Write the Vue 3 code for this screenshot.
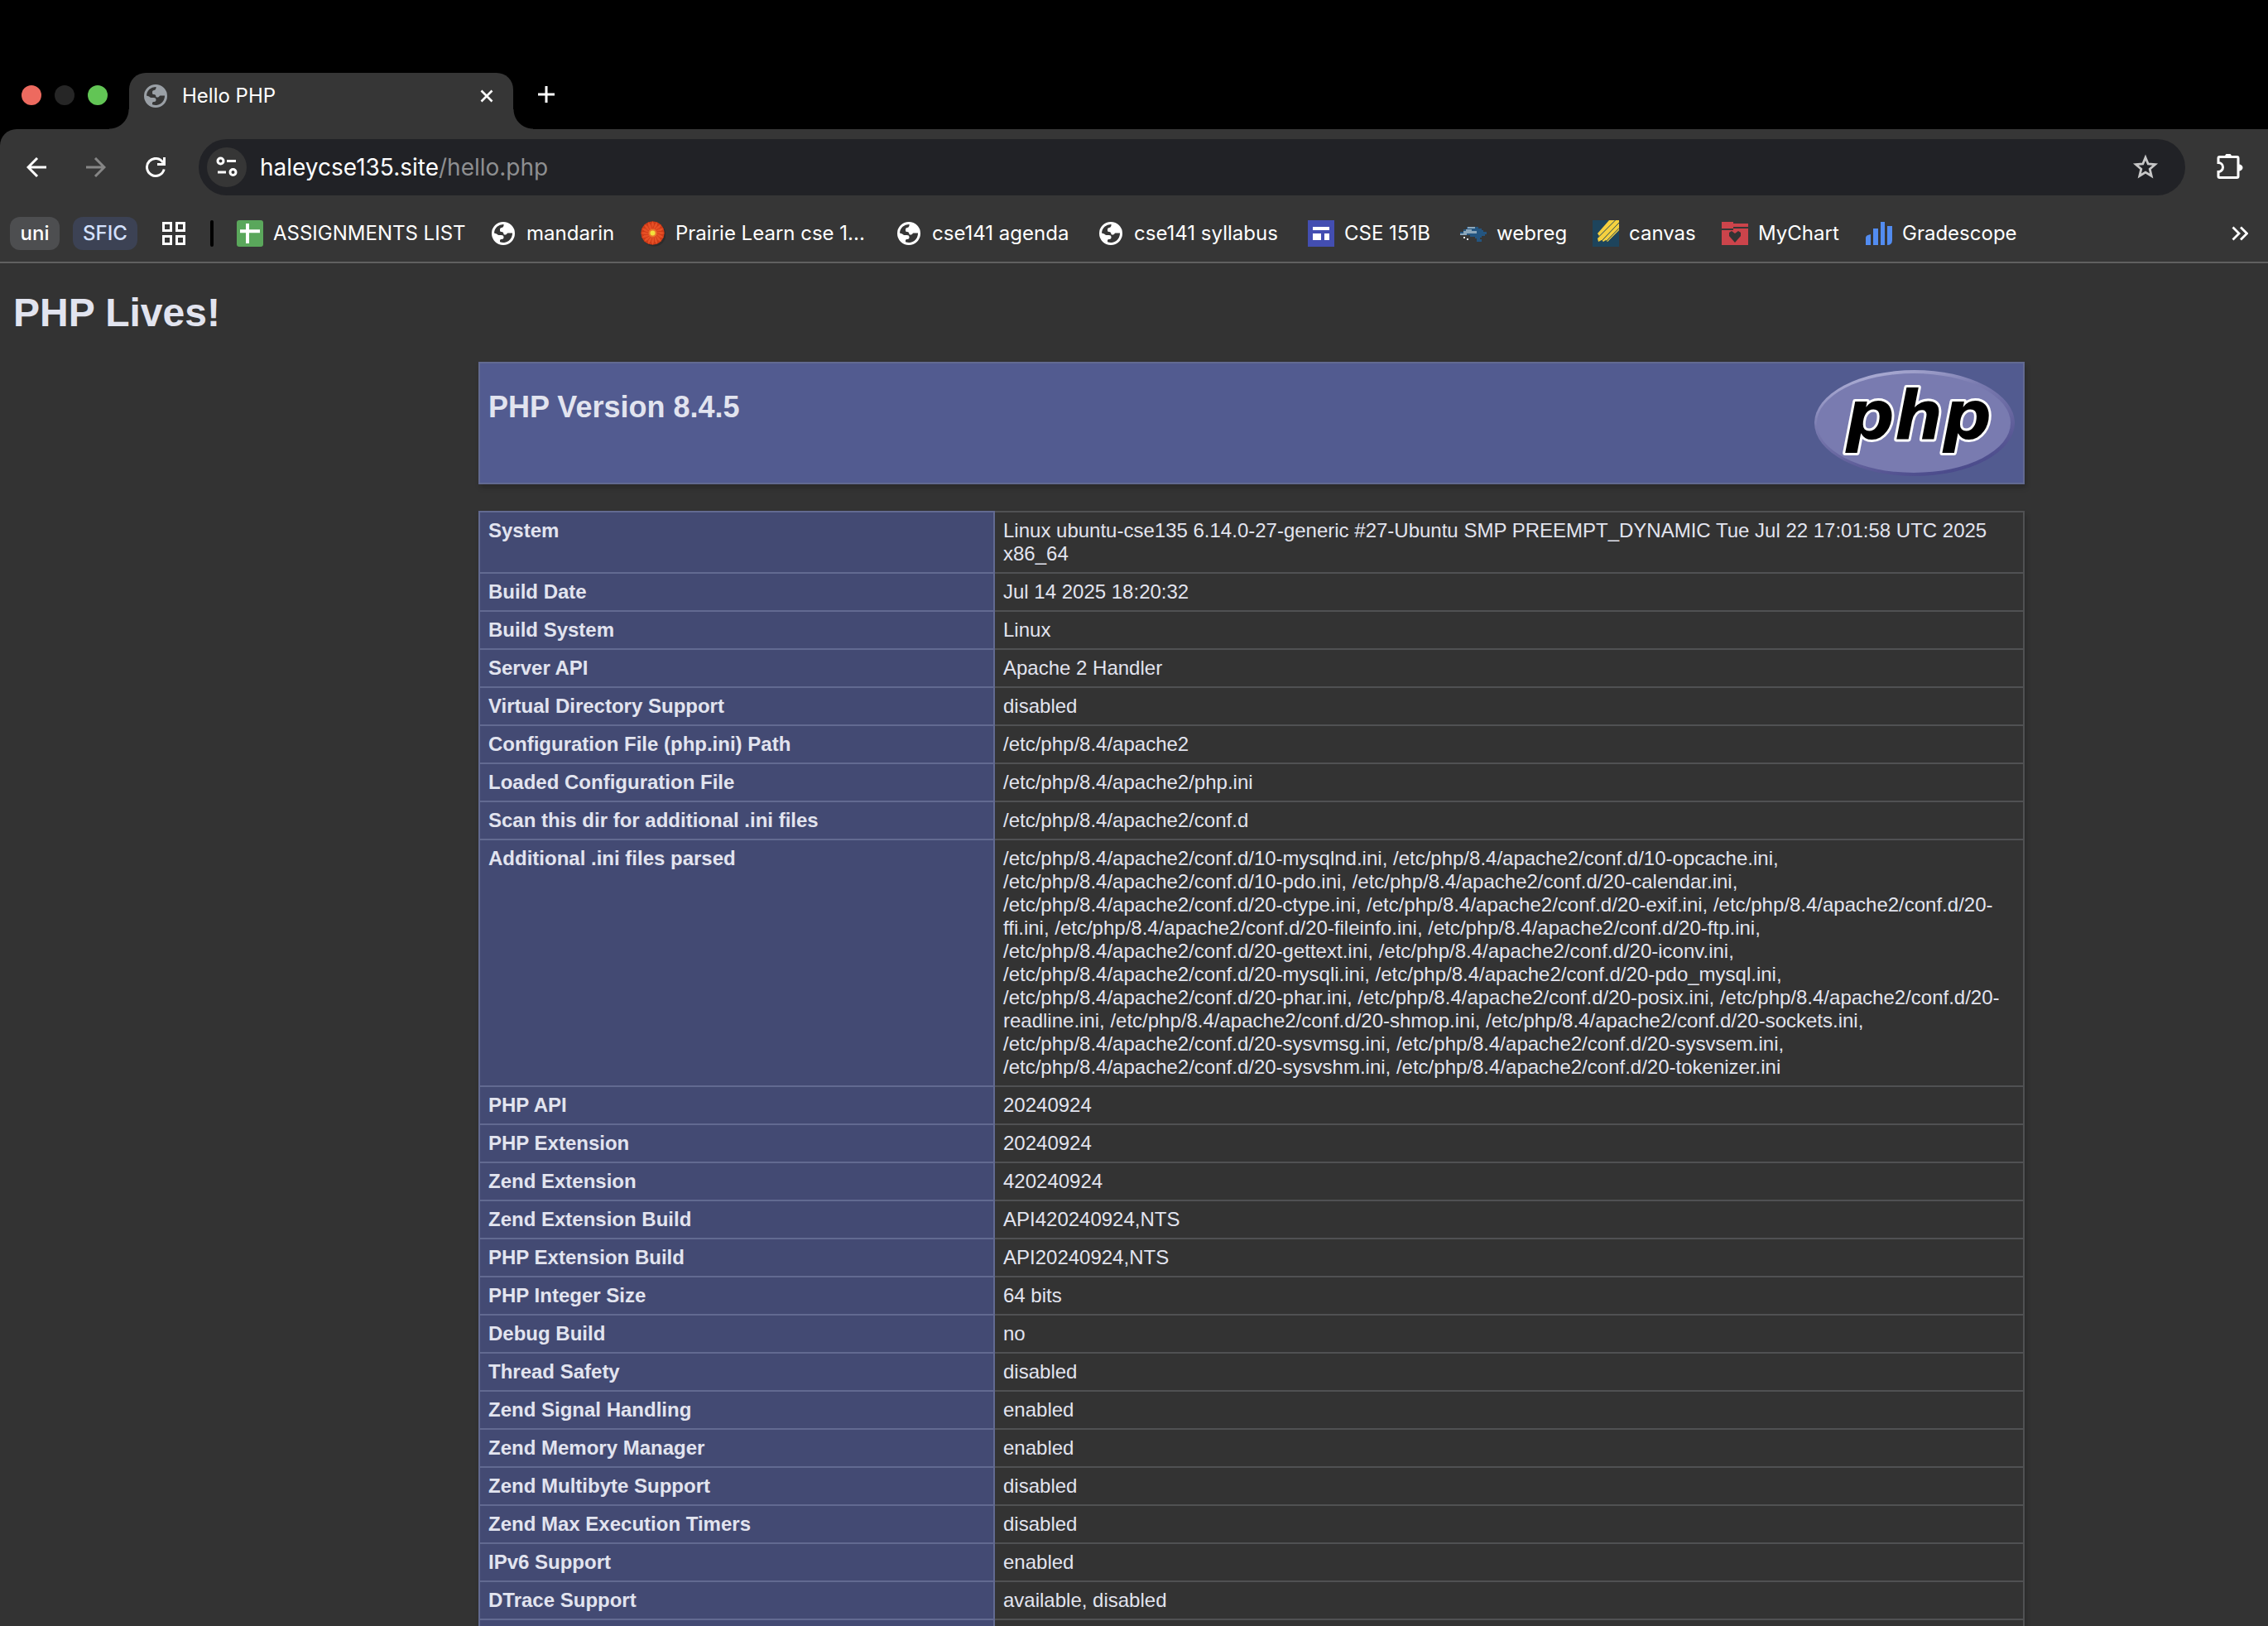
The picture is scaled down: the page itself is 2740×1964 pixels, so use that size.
<script setup>
const bookmarks = [
  { label: 'ASSIGNMENTS LIST', icon: 'sheet', width: 306 },
  { label: 'mandarin', icon: 'globe', width: 180 },
  { label: 'Prairie Learn cse 1...', icon: 'flower', width: 310 },
  { label: 'cse141 agenda', icon: 'globe', width: 244 },
  { label: 'cse141 syllabus', icon: 'globe', width: 254 },
  { label: 'CSE 151B', icon: 'sites', width: 184 },
  { label: 'webreg', icon: 'dolphin', width: 160 },
  { label: 'canvas', icon: 'canvas', width: 156 },
  { label: 'MyChart', icon: 'chart', width: 174 },
  { label: 'Gradescope', icon: 'bars', width: 184 },
]

const petals = Array.from({ length: 16 }, (_, i) => i * 22.5)

const dir = '/etc/php/8.4/apache2/conf.d/'
const iniFiles = [
  '10-mysqlnd', '10-opcache', '10-pdo', '20-calendar', '20-ctype', '20-exif', '20-ffi',
  '20-fileinfo', '20-ftp', '20-gettext', '20-iconv', '20-mysqli', '20-pdo_mysql', '20-phar',
  '20-posix', '20-readline', '20-shmop', '20-sockets', '20-sysvmsg', '20-sysvsem',
  '20-sysvshm', '20-tokenizer',
].map((name) => `${dir}${name}.ini`).join(', ')

const rows = [
  ['System', 'Linux ubuntu-cse135 6.14.0-27-generic #27-Ubuntu SMP PREEMPT_DYNAMIC Tue Jul 22 17:01:58 UTC 2025 x86_64'],
  ['Build Date', 'Jul 14 2025 18:20:32'],
  ['Build System', 'Linux'],
  ['Server API', 'Apache 2 Handler'],
  ['Virtual Directory Support', 'disabled'],
  ['Configuration File (php.ini) Path', '/etc/php/8.4/apache2'],
  ['Loaded Configuration File', '/etc/php/8.4/apache2/php.ini'],
  ['Scan this dir for additional .ini files', '/etc/php/8.4/apache2/conf.d'],
  ['Additional .ini files parsed', iniFiles],
  ['PHP API', '20240924'],
  ['PHP Extension', '20240924'],
  ['Zend Extension', '420240924'],
  ['Zend Extension Build', 'API420240924,NTS'],
  ['PHP Extension Build', 'API20240924,NTS'],
  ['PHP Integer Size', '64 bits'],
  ['Debug Build', 'no'],
  ['Thread Safety', 'disabled'],
  ['Zend Signal Handling', 'enabled'],
  ['Zend Memory Manager', 'enabled'],
  ['Zend Multibyte Support', 'disabled'],
  ['Zend Max Execution Timers', 'disabled'],
  ['IPv6 Support', 'enabled'],
  ['DTrace Support', 'available, disabled'],
  ['', ''],
]
</script>

<template>
  <div class="browser">
    <svg class="defs" aria-hidden="true">
      <symbol id="globe" viewBox="0 0 28 28">
        <path fill="currentColor" fill-rule="evenodd" d="M14 0a14 14 0 1 0 0 28a14 14 0 0 0 0-28zM14.5 3C14.8 5 13.8 6.6 12 7C10 7.3 10 8.400 10 10.500C10 11.500 11 12 12 12C13.500 12 14.300 13 14.300 14.200C14.300 15.400 15.500 15.800 17 15.500C18.300 15.200 18.500 13.500 19.500 13.500H25A11 11 0 0 1 10 24.300V22.500C10 21.500 10.800 21 12 21C14 21 14.500 19.800 14.500 18.500C14.500 16.800 13.500 16 11.500 16H8.500C7.500 16 7 15 6 14.500L3 13.500A11 11 0 0 1 14.500 3z" />
      </symbol>
    </svg>

    <header class="tabstrip">
      <div class="lights"><i class="red"></i><i class="dim"></i><i class="green"></i></div>
      <div class="tab">
        <svg class="favicon"><use href="#globe" /></svg>
        <span class="tab-title">Hello PHP</span>
        <button class="icon-btn" aria-label="Close tab">
          <svg width="16" height="16" viewBox="0 0 16 16"><path d="M1.500 1.500l13 13M14.500 1.500l-13 13" stroke="#fff" stroke-width="2.600" /></svg>
        </button>
      </div>
      <button class="icon-btn new-tab" aria-label="New tab">
        <svg width="20" height="20" viewBox="0 0 20 20"><path d="M10 0v20M0 10h20" stroke="#fff" stroke-width="3" /></svg>
      </button>
    </header>

    <nav class="toolbar">
      <button class="icon-btn" aria-label="Back">
        <svg width="24" height="24" viewBox="0 0 24 24"><path d="M24 12H2.500M13 1L2 12l11 11" fill="none" stroke="#fff" stroke-width="3" /></svg>
      </button>
      <button class="icon-btn" aria-label="Forward">
        <svg width="24" height="24" viewBox="0 0 24 24"><path d="M0 12h21.500M11 1l11 11-11 11" fill="none" stroke="#868686" stroke-width="3" /></svg>
      </button>
      <button class="icon-btn" aria-label="Reload">
        <svg width="24" height="24" viewBox="0 0 24 24"><path d="M22.200 14.500A10.500 10.500 0 1 1 21 6.500M22.500 0v8.500H14" fill="none" stroke="#fff" stroke-width="3" /></svg>
      </button>
      <div class="omnibox">
        <button class="site-info" aria-label="View site information">
          <svg width="26" height="26" viewBox="0 0 26 26" fill="none" stroke="#fff" stroke-width="3"><circle cx="5.500" cy="5.500" r="3.500" /><path d="M13 5.500h11M2 19h10" /><circle cx="20.500" cy="19" r="3.500" /></svg>
        </button>
        <span class="url">haleycse135.site<span class="path">/hello.php</span></span>
        <button class="icon-btn" aria-label="Bookmark this tab">
          <svg width="32" height="32" viewBox="0 0 32 32"><path d="M16 4.200l3.200 7.800 8.400.7-6.400 5.500 2 8.300-7.200-4.400-7.200 4.400 2-8.300-6.400-5.500 8.400-.7z" fill="none" stroke="#c7c7c7" stroke-width="2.800" /></svg>
        </button>
      </div>
      <button class="icon-btn" aria-label="Extensions">
        <svg width="32" height="32" viewBox="1 2 32 32"><path d="M4.500 5.500h21a1.500 1.500 0 0 1 1.500 1.500v22a1.500 1.500 0 0 1-1.500 1.500h-21a1.500 1.500 0 0 1-1.500-1.500v-5.500a5.500 5.500 0 0 0 0-11V7a1.500 1.500 0 0 1 1.500-1.500z" fill="none" stroke="#fff" stroke-width="3" /><path d="M11 5a4 3.500 0 0 1 8 0zM28 14.500a4.500 4 0 0 1 0 8z" fill="#fff" /></svg>
      </button>
    </nav>

    <nav class="bookmarks">
      <button class="chip uni">uni</button>
      <button class="chip sfic">SFIC</button>
      <button class="icon-btn grid-btn" aria-label="Tab groups">
        <svg width="28" height="28" viewBox="0 0 28 28" fill="none" stroke="#fff" stroke-width="3"><path d="M1.500 1.500h9v9h-9zM17.500 1.500h9v9h-9zM1.500 17.500h9v9h-9zM17.500 17.500h9v9h-9z" /></svg>
      </button>
      <i class="divider"></i>
      <a v-for="b in bookmarks" :key="b.label" href="#" class="bookmark" :style="{ width: b.width + 'px' }">
        <svg v-if="b.icon === 'globe'" class="mark" viewBox="-2 -2 32 32"><use href="#globe" width="28" height="28" /></svg>
        <svg v-else-if="b.icon === 'sheet'" class="mark" viewBox="0 0 32 32"><rect width="32" height="32" rx="3" fill="#5aa75b" /><path d="M13 4v24M4 13.200h24" stroke="#fff" stroke-width="4" /></svg>
        <svg v-else-if="b.icon === 'flower'" class="mark" viewBox="-1 0 32 32">
          <circle cx="17.500" cy="17.500" r="14" fill="#222" opacity=".5" />
          <circle cx="15.500" cy="15.500" r="14" fill="#cf3d1a" />
          <ellipse v-for="a in petals" :key="a" cx="15.500" cy="7" rx="2" ry="5.500" fill="#e65026" stroke="#c63413" stroke-width=".6" :transform="`rotate(${a} 15.5 15.500)`" />
          <circle cx="15.500" cy="15.500" r="5" fill="#e9782c" /><circle cx="15.500" cy="15.500" r="3" fill="#f3e13c" />
        </svg>
        <svg v-else-if="b.icon === 'sites'" class="mark" viewBox="0 0 32 32"><path fill="#434eb1" d="M0 0h32v32H0z" /><path fill="#fff" d="M6 8h20v4H6zM6 16h10v8H6zM20 16h6v8h-6z" /></svg>
        <svg v-else-if="b.icon === 'dolphin'" class="mark" viewBox="0 0 32 32">
          <path fill="#245580" d="M8 8h14v2h4v2h2v2h4v3h-2v2h-4v2h-2v2h2v3h-6v-4h-2v-2h-6v-2H0v-4h4v-3h4z" /><path fill="#8ba6ba" d="M9 8h9v2H9zM7 11h7v2H7zM4 13h16v3H4zM0 16h8v2H0z" /><path fill="#e4eaf0" d="M4 20h2v2H4zM8 22h2v2H8z" />
        </svg>
        <svg v-else-if="b.icon === 'canvas'" class="mark" viewBox="0 0 32 32"><path fill="#1d445c" d="M0 0h32v32H0z" /><path fill="#f5d13f" d="M20 0h12v12L18 26l-2-2-3 2-2-2-4 2-1-4 2-3-2-3z" /><path d="M27.500 0L6 21.500M32 3L10 26M32 9.500L15 27" stroke="#1d445c" stroke-width="1" /></svg>
        <svg v-else-if="b.icon === 'chart'" class="mark" viewBox="0 0 32 32"><path fill="#cc444b" d="M0 2h14v2h18v4H14v2H0zM0 12h14v-2h18v20H0z" /><path fill="#333" d="M16 27l-7-8v-4l3-2 4 3 4-3 3 2v4z" /></svg>
        <svg v-else class="mark" viewBox="0 0 32 32"><path fill="#528cf0" d="M0 21q0-3 6-4v13H0zM9 10h6v20H9zM18 2h5v28h-5zM26 7h6v17q0 6-6 6z" /></svg>
        <span>{{ b.label }}</span>
      </a>
      <button class="icon-btn more" aria-label="More bookmarks">
        <svg width="20" height="18" viewBox="0 0 20 18"><path d="M1.500 1.500L9 9l-7.500 7.500M11 1.500L18.500 9 11 16.500" fill="none" stroke="#fff" stroke-width="2.800" /></svg>
      </button>
    </nav>

    <main class="page">
      <h1>PHP Lives!</h1>
      <div class="info">
        <section class="banner">
          <h2>PHP Version 8.4.5</h2>
          <svg class="logo" viewBox="0 0 242 128" role="img" aria-label="PHP logo">
            <defs>
              <linearGradient id="rim" x1="0.2" y1="0" x2="0.7" y2="1">
                <stop offset="0" stop-color="#b4b5da" /><stop offset=".35" stop-color="#7a7bb0" /><stop offset=".65" stop-color="#66659f" /><stop offset="1" stop-color="#484889" />
              </linearGradient>
            </defs>
            <ellipse cx="121" cy="64" rx="121" ry="64" fill="url(#rim)" />
            <ellipse cx="120" cy="64" rx="117" ry="60" fill="#797bb0" />
            <text x="126" y="83" text-anchor="middle" class="wordmark">php</text>
          </svg>
        </section>
        <table>
          <colgroup><col class="key-col" /><col /></colgroup>
          <tbody>
            <tr v-for="(row, i) in rows" :key="i">
              <th scope="row">{{ row[0] }}</th>
              <td>{{ row[1] }}</td>
            </tr>
          </tbody>
        </table>
      </div>
    </main>
  </div>
</template>

<style>
body {
  margin: 0;
  background: #333;
}
</style>

<style scoped>
.browser {
  height: 100vh;
  overflow: hidden;
  background: #000;
  color: #fff;
  font: 24px/32px Inter, "Liberation Sans", sans-serif;
}
.defs {
  display: none;
}
button {
  padding: 0;
  border: 0;
  background: none;
  color: inherit;
  font: inherit;
}
.icon-btn {
  display: flex;
  flex: none;
}
.tabstrip {
  display: flex;
  align-items: flex-end;
  padding: 88px 0 0 26px;
}
.lights {
  display: flex;
  gap: 16px;
  width: 130px;
  height: 68px;
  padding-top: 15px;
  box-sizing: border-box;
}
.lights i {
  width: 24px;
  height: 24px;
  border-radius: 50%;
}
.red { background: #ed6a5f; }
.dim { background: #262626; }
.green { background: #62c555; }
.tab {
  position: relative;
  display: flex;
  align-items: center;
  width: 464px;
  height: 68px;
  padding: 0 24px 12px 18px;
  box-sizing: border-box;
  border-radius: 20px 20px 0 0;
  background: #363636;
}
.tab::before,
.tab::after {
  content: "";
  position: absolute;
  bottom: 0;
  width: 24px;
  height: 24px;
}
.tab::before {
  right: 100%;
  background: radial-gradient(circle at 0 0, transparent 23px, #363636 24px);
}
.tab::after {
  left: 100%;
  background: radial-gradient(circle at 100% 0, transparent 23px, #363636 24px);
}
.favicon {
  width: 28px;
  height: 28px;
  color: #9aa0a6;
}
.tab-title {
  flex: 1;
  padding-left: 18px;
}
.new-tab {
  padding: 0 0 32px 30px;
}
.toolbar {
  display: flex;
  align-items: center;
  gap: 40px;
  padding: 12px 30px 12px 32px;
  border-radius: 20px 0 0 0;
  background: #363636;
}
.toolbar > .icon-btn {
  margin-right: 8px;
}
.toolbar > .icon-btn:last-child {
  margin: 0;
}
.omnibox {
  flex: 1;
  display: flex;
  align-items: center;
  height: 68px;
  margin-right: -2px;
  margin-left: -8px;
  padding: 0 32px 0 10px;
  box-sizing: border-box;
  border-radius: 34px;
  background: #212226;
  font-size: 28px;
}
.site-info {
  display: flex;
  align-items: center;
  justify-content: center;
  width: 48px;
  height: 48px;
  border-radius: 50%;
  background: #363636;
}
.url {
  flex: 1;
  padding-left: 16px;
}
.path {
  color: #8e8f91;
}
.bookmarks {
  display: flex;
  align-items: center;
  height: 68px;
  padding: 0 24px 0 12px;
  border-bottom: 2px solid #606060;
  background: #363636;
}
.chip {
  height: 40px;
  margin-right: 16px;
  border-radius: 12px;
  font-weight: 500;
}
.uni {
  width: 60px;
  background: #4d4e50;
}
.sfic {
  width: 78px;
  background: #3c4254;
  color: #d3e0fc;
}
.grid-btn {
  padding: 0 30px 0 14px;
}
.divider {
  width: 4px;
  height: 32px;
  margin-right: 28px;
  border-radius: 2px;
  background: #000;
}
.bookmark {
  display: flex;
  flex: none;
  align-items: center;
  gap: 12px;
  color: inherit;
  text-decoration: none;
  white-space: nowrap;
}
.mark {
  flex: none;
  width: 32px;
  height: 32px;
}
.more {
  margin-left: auto;
}
.page {
  padding: 32px 0 0 16px;
  background: #333;
  color: #e2e4ef;
  font: 24px/28px "Liberation Sans", Arial, sans-serif;
}
h1 {
  margin: 0;
  font-size: 48px;
  line-height: 56px;
}
.info {
  margin: 31px 294px 0 562px;
}
.banner {
  display: flex;
  justify-content: space-between;
  height: 148px;
  padding: 8px 10px;
  box-sizing: border-box;
  border: 2px solid #626a91;
  background: #525b90;
  box-shadow: 2px 4px 6px rgba(0, 0, 0, 0.2);
}
h2 {
  margin: 25px 0 0;
  font-size: 36px;
  line-height: 40px;
}
.logo {
  width: 242px;
  height: 128px;
}
.wordmark {
  font: italic bold 82px "DejaVu Sans", Verdana, sans-serif;
  fill: #000;
  stroke: #fff;
  stroke-width: 6px;
  stroke-linejoin: round;
  paint-order: stroke;
}
table {
  width: 100%;
  margin-top: 32px;
  border-collapse: collapse;
  table-layout: fixed;
  box-shadow: 2px 4px 6px rgba(0, 0, 0, 0.2);
}
.key-col {
  width: 622px;
}
th,
td {
  height: 28px;
  padding: 8px 10px;
  border: 2px solid #505153;
  text-align: left;
  vertical-align: top;
}
th {
  border-color: #626a91;
  background: #434a73;
}
</style>
